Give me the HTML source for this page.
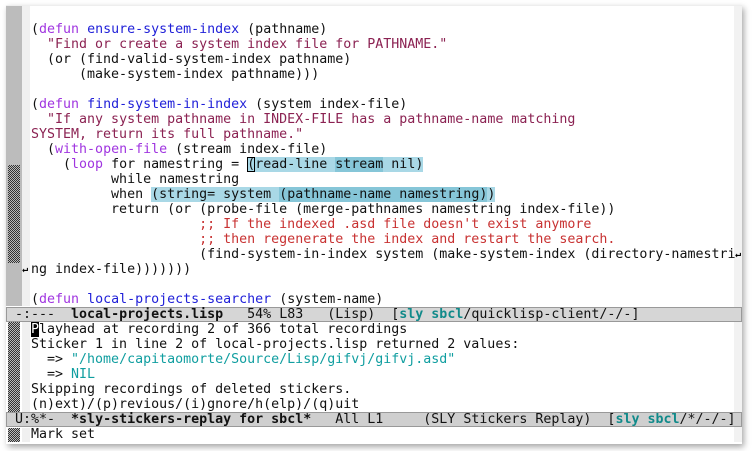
<!DOCTYPE html>
<html><head><meta charset="utf-8"><style>
body{margin:0;width:752px;height:451px;background:#fff;overflow:hidden;position:relative;font-family:"DejaVu Sans Mono","Liberation Mono",monospace;font-size:13.3px;}
#win{position:absolute;left:6px;top:5px;width:736px;height:438px;background:#fff;box-shadow:2px 3px 6px rgba(0,0,0,.35);border-top:1px solid #eee;}
.r{position:absolute;left:31px;height:15px;line-height:15px;white-space:pre;color:#111;}
.k{color:#a035e0}.f{color:#1f1fd8}.s{color:#8b2252}.c{color:#c83232}.t{color:#109ea0}.tb{color:#108a8a;font-weight:bold}
.h1{background:#a9d8e6}.h2{background:#86c6d8}
.ml{position:absolute;left:6px;width:734px;height:13px;line-height:13px;background:#d6d6d6;border:1px solid #999;white-space:pre;color:#111;}
.fr{position:absolute;}
.chk{background-color:#bbb;background-image:repeating-conic-gradient(#333 0 25%,#bbb 0 50%);background-size:2px 2px;}
</style></head><body>
<div id="win"></div>
<div class="fr" style="left:6px;top:6px;width:16px;height:300px;background:#bcbcbc"></div>
<div class="fr" style="left:22px;top:6px;width:8px;height:300px;background:#f0f0f0"></div>
<div class="fr chk" style="left:8px;top:165px;width:12px;height:98px"></div>
<div class="fr" style="left:734px;top:6px;width:8px;height:436px;background:#f2f2f2"></div>
<div class="r" style="top:22px"><span>(</span><span class="k">defun</span> <span class="f">ensure-system-index</span> (pathname)</div>
<div class="r" style="top:37px">  <span class="s">"Find or create a system index file for PATHNAME."</span></div>
<div class="r" style="top:52px">  (or (find-valid-system-index pathname)</div>
<div class="r" style="top:67px">      (make-system-index pathname)))</div>
<div class="r" style="top:97px">(<span class="k">defun</span> <span class="f">find-system-in-index</span> (system index-file)</div>
<div class="r" style="top:112px">  <span class="s">"If any system pathname in INDEX-FILE has a pathname-name matching</span></div>
<div class="r" style="top:127px"><span class="s">SYSTEM, return its full pathname."</span></div>
<div class="r" style="top:142px">  (<span class="k">with-open-file</span> (stream index-file)</div>
<div class="r" style="top:157px">    (<span class="k">loop</span> for namestring = <span class="h1"><span style="outline:1.5px solid #000;outline-offset:-1.5px">(</span>read-line </span><span class="h2">stream</span><span class="h1"> nil)</span></div>
<div class="r" style="top:172px">          while namestring</div>
<div class="r" style="top:187px">          when <span class="h1">(string= system </span><span class="h2">(pathname-name namestring)</span><span class="h1">)</span></div>
<div class="r" style="top:202px">          return (or (probe-file (merge-pathnames namestring index-file))</div>
<div class="r" style="top:217px">                     <span class="c">;; If the indexed .asd file doesn't exist anymore</span></div>
<div class="r" style="top:232px">                     <span class="c">;; then regenerate the index and restart the search.</span></div>
<div class="r" style="top:247px">                     (find-system-in-index system (make-system-index (directory-namestri</div>
<div class="fr" style="left:735px;top:251px;font-size:10px;line-height:8px;font-weight:bold">↵</div>
<div class="fr" style="left:22px;top:266px;font-size:10px;line-height:8px;font-weight:bold">↵</div>
<div class="r" style="top:262px">ng index-file)))))))</div>
<div class="r" style="top:292px">(<span class="k">defun</span> <span class="f">local-projects-searcher</span> (system-name)</div>
<div class="ml" style="top:307px"><span> -:---  <b>local-projects.lisp</b>   54% L83   (Lisp)  [<span class="tb">sly sbcl</span>/quicklisp-client/-/-]</span></div>
<div class="fr chk" style="left:8px;top:322px;width:12px;height:90px"></div>
<div class="fr" style="left:22px;top:322px;width:8px;height:90px;background:#f0f0f0"></div>
<div class="r" style="top:322px"><span style="background:#000;color:#fff">P</span>layhead at recording 2 of 366 total recordings</div>
<div class="r" style="top:337px">Sticker 1 in line 2 of local-projects.lisp returned 2 values:</div>
<div class="r" style="top:352px">  =&gt; <span class="t">"/home/capitaomorte/Source/Lisp/gifvj/gifvj.asd"</span></div>
<div class="r" style="top:367px">  =&gt; <span class="t">NIL</span></div>
<div class="r" style="top:382px">Skipping recordings of deleted stickers.</div>
<div class="r" style="top:397px">(n)ext)/(p)revious/(i)gnore/h(elp)/(q)uit</div>
<div class="ml" style="top:412px;background:#cfcfcf"><span> U:%*-  <b>*sly-stickers-replay for sbcl*</b>   All L1     (SLY Stickers Replay)  [<span class="tb">sly sbcl</span>/*/-/-]</span></div>
<div class="fr chk" style="left:8px;top:428px;width:12px;height:14px"></div>
<div class="fr" style="left:22px;top:428px;width:8px;height:14px;background:#f0f0f0"></div>
<div class="r" style="top:427px">Mark set</div>
</body></html>
